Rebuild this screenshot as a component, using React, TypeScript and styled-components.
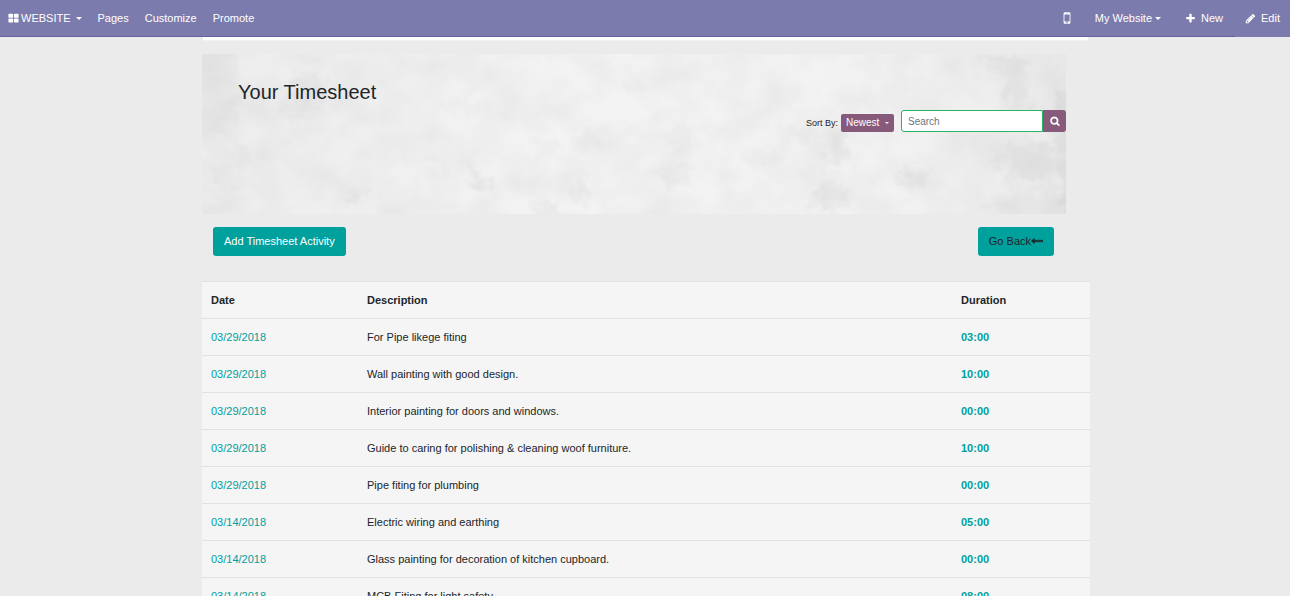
import React from "react";
import styled, { createGlobalStyle } from "styled-components";

const teal = "#00a09d";
const plum = "#875a7b";
const navPurple = "#7c7bad";

const GlobalStyle = createGlobalStyle`
  *, *::before, *::after { box-sizing: border-box; }
  html { scrollbar-width: none; }
  body {
    margin: 0;
    background: #ebebeb;
    color: #212529;
    font: 11px/18px "Liberation Sans", Arial, sans-serif;
  }
  button, input, select { font-family: inherit; margin: 0; }
`;

const Navbar = styled.nav`
  position: sticky;
  top: 0;
  z-index: 2;
  display: flex;
  justify-content: space-between;
  height: 37px;
  background: ${navPurple};
  box-shadow: inset 0 -1px #6564a0;
`;

const NavGroup = styled.div`
  display: flex;
`;

const NavButton = styled.button<{ $pad?: number; $gap?: number; $solid?: boolean }>`
  display: flex;
  align-items: center;
  gap: ${(p) => p.$gap ?? 0}px;
  height: 37px;
  padding: 0 ${(p) => p.$pad ?? 8}px 1px;
  border: 0;
  background: ${(p) => (p.$solid ? navPurple : "transparent")};
  color: #fff;
  font-size: 11px;
  line-height: 18px;
  white-space: nowrap;
  cursor: pointer;
`;

const Caret = styled.span<{ $size?: number; $space?: number }>`
  margin-left: ${(p) => p.$space ?? 0}px;
  border: ${(p) => p.$size ?? 3}px solid transparent;
  border-top-color: currentColor;
  border-bottom: 0;
`;

const Glyph = styled.svg<{ $size: number; $bold: boolean }>`
  flex: none;
  width: ${(p) => p.$size}px;
  height: ${(p) => p.$size}px;
  fill: currentColor;
  stroke: ${(p) => (p.$bold ? "currentColor" : "none")};
  stroke-width: 60px;
`;

const Page = styled.main`
  padding-left: 2px;
`;

const Container = styled.div`
  max-width: 888px;
  margin: 0 auto;
`;

const CardEdge = styled.div`
  height: 3px;
  margin: 0 2px 14px 1px;
  background: #fff;
  box-shadow: 0 1px 1px rgba(255, 255, 255, 0.4);
`;

const Hero = styled.header`
  position: relative;
  isolation: isolate;
  display: flex;
  flex-direction: column;
  gap: 6px;
  min-height: 160px;
  margin-right: 24px;
  padding-top: 26px;
  background: #eee;
`;

const Backdrop = styled.svg`
  position: absolute;
  inset: 0;
  z-index: -1;
  width: 100%;
  height: 100%;
`;

const Title = styled.h1`
  margin: 0;
  padding-left: 36px;
  font-size: 20px;
  font-weight: 400;
  line-height: 24px;
`;

const Filters = styled.form`
  display: flex;
  justify-content: flex-end;
  align-items: center;
  gap: 7px;
`;

const SortField = styled.div`
  display: flex;
  align-items: center;
  gap: 3px;
  padding-top: 3px;
  font-size: 9px;
`;

const SelectBox = styled.span`
  position: relative;
  display: flex;
  color: #fff;

  ${Caret} {
    position: absolute;
    right: 5px;
    top: 8px;
    pointer-events: none;
  }
`;

const Select = styled.select`
  appearance: none;
  width: 53px;
  height: 18px;
  padding: 0 5px;
  border: 0;
  border-radius: 2px;
  background: ${plum};
  color: #fff;
  font-size: 10px;
  line-height: 18px;
`;

const SearchGroup = styled.div`
  display: flex;
  height: 22px;
`;

const SearchInput = styled.input`
  width: 142px;
  padding: 0 6px;
  border: 1px solid #28b463;
  border-radius: 3px 0 0 3px;
  background: #fff;
  color: #495057;
  font-size: 10px;
  outline: 0;

  &::placeholder { color: #6c757d; opacity: 1; }
`;

const SearchButton = styled.button`
  display: flex;
  align-items: center;
  justify-content: center;
  width: 23px;
  padding: 0;
  border: 0;
  border-radius: 0 3px 3px 0;
  background: ${plum};
  color: #fff;
`;

const Actions = styled.div`
  display: flex;
  justify-content: space-between;
  padding: 13px 36px 25px 11px;
`;

const Action = styled.a<{ $dark?: boolean }>`
  display: flex;
  align-items: center;
  height: 29px;
  padding: 0 11px 1px;
  border-radius: 3px;
  background: ${teal};
  color: ${(p) => (p.$dark ? "#212529" : "#fff")};
  text-decoration: none;
`;

const Table = styled.table`
  width: 100%;
  table-layout: fixed;
  border-spacing: 0;
  background: #f5f5f5;
`;

const Cell = styled.td`
  padding: 9px;
  border-top: 1px solid #dee2e6;
  text-align: left;
`;

const HeadCell = styled(Cell).attrs({ as: "th", scope: "col" })<{ $width?: number }>`
  width: ${(p) => (p.$width ? `${p.$width}px` : "auto")};
  font-weight: 700;
`;

const DateLink = styled.a`
  color: ${teal};
  text-decoration: none;
`;

const Duration = styled.strong`
  color: ${teal};
`;

const paths = {
  grid: "M832 1024v384q0 52-38 90t-90 38h-512q-52 0-90-38t-38-90v-384q0-52 38-90t90-38h512q52 0 90 38t38 90zm0-768v384q0 52-38 90t-90 38h-512q-52 0-90-38t-38-90v-384q0-52 38-90t90-38h512q52 0 90 38t38 90zm896 768v384q0 52-38 90t-90 38h-512q-52 0-90-38t-38-90v-384q0-52 38-90t90-38h512q52 0 90 38t38 90zm0-768v384q0 52-38 90t-90 38h-512q-52 0-90-38t-38-90v-384q0-52 38-90t90-38h512q52 0 90 38t38 90z",
  mobile: "M976 1408q0-33-23.5-56.5t-56.5-23.5-56.5 23.5-23.5 56.5 23.5 56.5 56.5 23.5 56.5-23.5 23.5-56.5zm208-160v-704q0-13-9.5-22.5t-22.5-9.5h-512q-13 0-22.5 9.5t-9.5 22.5v704q0 13 9.5 22.5t22.5 9.5h512q13 0 22.5-9.5t9.5-22.5zm-192-848q0-16-16-16h-160q-16 0-16 16t16 16h160q16 0 16-16zm288-16v1024q0 52-38 90t-90 38h-512q-52 0-90-38t-38-90v-1024q0-52 38-90t90-38h512q52 0 90 38t38 90z",
  plus: "M1600 736v192q0 40-28 68t-68 28h-416v416q0 40-28 68t-68 28h-192q-40 0-68-28t-28-68v-416h-416q-40 0-68-28t-28-68v-192q0-40 28-68t68-28h416v-416q0-40 28-68t68-28h192q40 0 68 28t28 68v416h416q40 0 68 28t28 68z",
  pencil: "M491 1536l91-91-235-235-91 91v107h128v128h107zm523-928q0-22-22-22-10 0-17 7l-542 542q-7 7-7 17 0 22 22 22 10 0 17-7l542-542q7-7 7-17zm-54-192l416 416-832 832h-416v-416zm683 96q0 53-37 90l-166 166-416-416 166-165q36-38 90-38 53 0 91 38l235 234q37 39 37 91z",
  search: "M1216 832q0-185-131.5-316.5t-316.5-131.5-316.5 131.5-131.5 316.5 131.5 316.5 316.5 131.5 316.5-131.5 131.5-316.5zm512 832q0 52-38 90t-90 38q-54 0-90-38l-343-342q-179 124-399 124-143 0-273.5-55.5t-225-150-150-225-55.5-273.5 55.5-273.5 150-225 225-150 273.5-55.5 273.5 55.5 225 150 150 225 55.5 273.5q0 220-124 399l343 343q37 37 37 90z",
  arrowLeft: "M1792 800v192q0 14-9 23t-23 9h-1248v224q0 21-19 29t-35-5l-384-350q-10-10-10-23 0-14 10-24l384-354q16-14 35-6 19 9 19 29v224h1248q14 0 23 9t9 23z",
};

type IconProps = { name: keyof typeof paths; size?: number; bold?: boolean };

const Icon = ({ name, size = 11, bold = false }: IconProps) => (
  <Glyph $size={size} $bold={bold} viewBox="0 0 1792 1792" aria-hidden="true">
    <path d={paths[name]} />
  </Glyph>
);

/* Stains of the plaster wall: centre x, centre y, radius x, radius y, opacity */
const stains = [
  [106, 34, 20, 14, 0.04],
  [99, 58, 16, 10, 0.03],
  [8, 30, 30, 60, 0.02],
  [26, 106, 18, 22, 0.02],
  [16, 128, 8, 6, 0.03],
  [151, 141, 14, 6, 0.03],
  [264, 52, 26, 7, 0.02],
  [278, 128, 12, 8, 0.05],
  [342, 94, 12, 16, 0.02],
  [345, 155, 14, 7, 0.04],
  [380, 140, 8, 14, 0.03],
  [385, 84, 12, 14, 0.02],
  [232, 114, 10, 8, 0.02],
  [434, 34, 10, 10, 0.02],
  [472, 118, 24, 10, 0.03],
  [478, 86, 16, 18, 0.02],
  [560, 104, 18, 7, 0.02],
  [590, 80, 24, 5, 0.02],
  [636, 92, 10, 22, 0.03],
  [628, 142, 18, 14, 0.04],
  [712, 127, 14, 9, 0.04],
  [815, 34, 14, 24, 0.03],
  [796, 8, 24, 6, 0.04],
  [826, 108, 28, 20, 0.04],
  [870, 95, 14, 70, 0.04],
  [840, 154, 60, 14, 0.02],
];

const Plaster = () => (
  <Backdrop viewBox="0 0 864 160" preserveAspectRatio="none" aria-hidden="true">
    <defs>
      <filter id="mottle" x="0" y="0" width="100%" height="100%" colorInterpolationFilters="sRGB">
        <feTurbulence type="fractalNoise" baseFrequency="0.025 0.028" numOctaves="4" seed="11" />
        <feColorMatrix values="0 0 0 0 0  0 0 0 0 0  0 0 0 0 0  0.07 0 0 0 -0.022" />
      </filter>
      <filter id="ragged" x="-10%" y="-10%" width="120%" height="120%" colorInterpolationFilters="sRGB">
        <feTurbulence type="fractalNoise" baseFrequency="0.08" numOctaves="3" seed="4" result="noise" />
        <feGaussianBlur in="SourceGraphic" stdDeviation="4" result="soft" />
        <feDisplacementMap in="soft" in2="noise" scale="28" xChannelSelector="R" yChannelSelector="G" />
      </filter>
      <linearGradient id="light">
        <stop offset="0" stopColor="#ededed" />
        <stop offset="0.4" stopColor="#f3f3f3" />
        <stop offset="0.8" stopColor="#f2f2f2" />
        <stop offset="1" stopColor="#ebebeb" />
      </linearGradient>
    </defs>
    <rect width="864" height="160" fill="url(#light)" />
    <rect width="864" height="160" filter="url(#mottle)" />
    <g filter="url(#ragged)">
      {stains.map(([cx, cy, rx, ry, o]) => (
        <ellipse key={`${cx}-${cy}`} cx={cx} cy={cy} rx={rx} ry={ry} fillOpacity={o} />
      ))}
    </g>
  </Backdrop>
);

const rows = [
  ["03/29/2018", "For Pipe likege fiting", "03:00"],
  ["03/29/2018", "Wall painting with good design.", "10:00"],
  ["03/29/2018", "Interior painting for doors and windows.", "00:00"],
  ["03/29/2018", "Guide to caring for polishing & cleaning woof furniture.", "10:00"],
  ["03/29/2018", "Pipe fiting for plumbing", "00:00"],
  ["03/14/2018", "Electric wiring and earthing", "05:00"],
  ["03/14/2018", "Glass painting for decoration of kitchen cupboard.", "00:00"],
  ["03/14/2018", "MCB Fiting for light safety.", "08:00"],
];

export default function App() {
  return (
    <>
      <GlobalStyle />
      <Navbar>
        <NavGroup>
          <NavButton $gap={2}>
            <Icon name="grid" />
            WEBSITE
            <Caret $space={3} />
          </NavButton>
          <NavButton>Pages</NavButton>
          <NavButton>Customize</NavButton>
          <NavButton>Promote</NavButton>
        </NavGroup>
        <NavGroup>
          <NavButton aria-label="Mobile preview">
            <Icon name="mobile" size={16} />
          </NavButton>
          <NavButton $pad={12} $gap={3}>
            My Website
            <Caret />
          </NavButton>
          <NavButton $pad={12} $gap={5}>
            <Icon name="plus" />
            New
          </NavButton>
          <NavButton $pad={10} $gap={5} $solid>
            <Icon name="pencil" />
            Edit
          </NavButton>
        </NavGroup>
      </Navbar>
      <Page>
        <Container>
          <CardEdge />
          <Hero>
            <Plaster />
            <Title>Your Timesheet</Title>
            <Filters onSubmit={(e) => e.preventDefault()}>
              <SortField>
                <label htmlFor="sort">Sort By:</label>
                <SelectBox>
                  <Select id="sort" defaultValue="Newest">
                    <option>Newest</option>
                  </Select>
                  <Caret $size={2} />
                </SelectBox>
              </SortField>
              <SearchGroup>
                <SearchInput type="text" placeholder="Search" aria-label="Search" />
                <SearchButton type="submit" aria-label="Search">
                  <Icon name="search" size={10} bold />
                </SearchButton>
              </SearchGroup>
            </Filters>
          </Hero>
          <Actions>
            <Action href="#add">Add Timesheet Activity</Action>
            <Action href="#back" $dark>
              Go Back
              <Icon name="arrowLeft" size={12} bold />
            </Action>
          </Actions>
          <Table>
            <thead>
              <tr>
                <HeadCell $width={156}>Date</HeadCell>
                <HeadCell>Description</HeadCell>
                <HeadCell $width={138}>Duration</HeadCell>
              </tr>
            </thead>
            <tbody>
              {rows.map(([date, text, duration], i) => (
                <tr key={i}>
                  <Cell>
                    <DateLink href="#entry">{date}</DateLink>
                  </Cell>
                  <Cell>{text}</Cell>
                  <Cell>
                    <Duration>{duration}</Duration>
                  </Cell>
                </tr>
              ))}
            </tbody>
          </Table>
        </Container>
      </Page>
    </>
  );
}
